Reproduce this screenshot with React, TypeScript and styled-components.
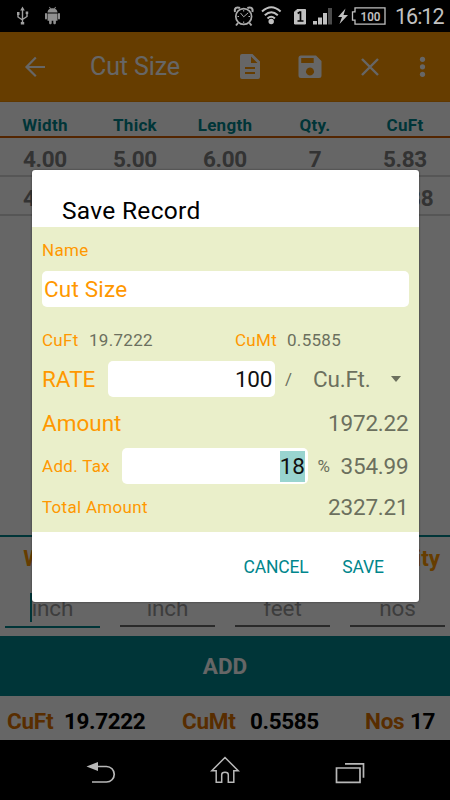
import React from "react";
import styled, { createGlobalStyle } from "styled-components";

const teal = "#00868c";
const orange = "#ff9800";
const muted = "#6c705e";

const GlobalStyle = createGlobalStyle`
  html, body { margin: 0; padding: 0; background: #000; }
  * { box-sizing: border-box; }
`;

const Phone = styled.div`
  position: relative;
  width: 450px;
  height: 800px;
  overflow: hidden;
  display: flex;
  flex-direction: column;
  background: #000;
  font-family: Roboto, "Liberation Sans", sans-serif;
`;

const StatusBar = styled.header`
  height: 32px;
  flex: none;
  display: flex;
  justify-content: space-between;
  background: #000;
  svg { display: block; }
`;

const StatusRight = styled.div`
  display: flex;
`;

const Clock = styled.span`
  width: 62px;
  line-height: 33px;
  padding-left: 7px;
  font-size: 21.5px;
  letter-spacing: -1px;
  color: #c2c2c2;
  white-space: nowrap;
`;

const Screen = styled.main`
  position: relative;
  height: 708px;
  flex: none;
  display: flex;
  flex-direction: column;
  background: #fff;
`;

const Scrim = styled.div`
  position: absolute;
  inset: 0;
  background: rgba(0, 0, 0, 0.6);
`;

const AppBar = styled.div`
  height: 70px;
  flex: none;
  display: flex;
  align-items: center;
  background: ${orange};
  border-bottom: 1px solid #f08c00;
  svg { display: block; }
`;

const AppTitle = styled.h1`
  margin: 0;
  width: 136px;
  font-size: 25px;
  font-weight: 400;
  line-height: 71px;
  color: #fff;
  letter-spacing: -0.1px;
`;

const Columns = styled.div<{ $h: number; $head?: boolean }>`
  height: ${(p) => p.$h}px;
  flex: none;
  display: grid;
  grid-template-columns: repeat(5, 90px);
  text-align: center;
  font-weight: 700;
  font-size: ${(p) => (p.$head ? 17 : 22.5)}px;
  letter-spacing: ${(p) => (p.$head ? 0.3 : -0.35)}px;
  color: ${(p) => (p.$head ? teal : "#808080")};
  border-bottom: 2px solid ${(p) => (p.$head ? "#d05c00" : "#d8d8d8")};
  line-height: ${(p) => (p.$head ? 46 : 42.5)}px;
`;

const Records = styled.div`
  height: 435px;
  flex: none;
  border-bottom: 2px solid ${teal};
`;

const Fields = styled.div`
  height: 99px;
  flex: none;
  display: grid;
  grid-template-columns: repeat(4, 95px);
  column-gap: 20px;
  padding-left: 5px;
`;

const Field = styled.label`
  display: flex;
  flex-direction: column;
  text-align: center;
  font-size: 22.5px;
`;

const FieldLabel = styled.b`
  height: 43px;
  line-height: 43px;
  color: ${orange};
`;

const FieldHint = styled.span<{ $active?: boolean }>`
  height: ${(p) => (p.$active ? 47.5 : 47)}px;
  line-height: 57px;
  color: #999;
  letter-spacing: -0.1px;
  border-bottom: 2px solid ${(p) => (p.$active ? teal : "#6a6a6a")};
`;

const Caret = styled.i`
  display: inline-block;
  width: 2px;
  height: 29px;
  margin-left: -2px;
  vertical-align: -6px;
  background: ${teal};
`;

const AddBar = styled.div`
  height: 60px;
  flex: none;
  line-height: 61px;
  text-align: center;
  background: ${teal};
  color: #fff;
  font-size: 22.5px;
  font-weight: 700;
`;

const Totals = styled.div`
  height: 44px;
  display: flex;
  line-height: 50.5px;
  padding-left: 7px;
  font-size: 22.5px;
  font-weight: 700;
  color: #000;
  white-space: nowrap;
`;

const TotalName = styled.span<{ $w: number }>`
  width: ${(p) => p.$w}px;
  letter-spacing: -0.25px;
  color: #dc7200;
`;

const TotalValue = styled.span<{ $w: number }>`
  width: ${(p) => p.$w}px;
  letter-spacing: -0.4px;
`;

const NavBar = styled.nav`
  height: 60px;
  flex: none;
  svg { display: block; }
`;

const Dialog = styled.section`
  position: absolute;
  left: 31.5px;
  top: 170px;
  width: 387px;
  height: 431.5px;
  display: flex;
  flex-direction: column;
  background: #fff;
  border-radius: 3px;
  overflow: hidden;
  box-shadow: 0 0 2px rgba(0, 0, 0, 0.6);
`;

const DialogTitle = styled.h2`
  margin: 0;
  height: 57px;
  flex: none;
  padding: 26px 0 0 30.5px;
  font-size: 24.500px;
  font-weight: 400;
  line-height: 30px;
  color: #000;
  letter-spacing: 0.3px;
`;

const Form = styled.div`
  height: 304.5px;
  flex: none;
  padding: 0 10px 0 10.5px;
  background: #eaefca;
`;

const Row = styled.div<{ $h: number; $drop?: number }>`
  height: ${(p) => p.$h}px;
  padding-top: ${(p) => p.$drop ?? 0}px;
  display: flex;
  align-items: center;
  white-space: nowrap;
`;

const Text = styled.span<{ $big?: boolean; $w?: number; $grey?: boolean; $end?: boolean; $inset?: number }>`
  flex: none;
  width: ${(p) => (p.$w ? `${p.$w}px` : "auto")};
  margin-left: ${(p) => (p.$end ? "auto" : "0")};
  padding-left: ${(p) => p.$inset ?? 0}px;
  font-size: ${(p) => (p.$big ? 22.5 : 17)}px;
  line-height: 26px;
  letter-spacing: ${(p) => (p.$big ? (p.$grey ? -0.2 : 0) : 0.3)}px;
  color: ${(p) => (p.$grey ? muted : orange)};
`;

const Input = styled.div<{ $w: number; $right?: boolean }>`
  width: ${(p) => p.$w}px;
  height: 36px;
  flex: none;
  display: flex;
  align-items: center;
  justify-content: ${(p) => (p.$right ? "flex-end" : "flex-start")};
  padding: 0 3px 0 2px;
  border-radius: 5px;
  background: #fff;
  color: ${(p) => (p.$right ? "#111" : orange)};
  font-size: 22.5px;
  line-height: 31px;
  letter-spacing: ${(p) => (p.$right ? -0.3 : 0.2)}px;
`;

const Selection = styled.span`
  background: #99d4cf;
  height: 31px;
`;

const Actions = styled.div`
  height: 70px;
  display: flex;
  align-items: center;
  padding-left: 212px;
  gap: 34px;
`;

const Action = styled.button`
  border: 0;
  padding: 0;
  background: none;
  font: 400 17.500px/20px Roboto, sans-serif;
  letter-spacing: -0.2px;
  color: ${teal};
`;

const DropArrow = styled.i`
  margin-left: auto;
  margin-right: 7.5px;
  border: 5.5px solid transparent;
  border-top: 6px solid ${muted};
  border-bottom: 0;
`;

const LeftIcons = () => (
  <svg width="70" height="32" fill="none" stroke="#a0a0a0" strokeWidth="1.4">
    <path d="M22.5 9v14M18 13v4l4.5 3M27 12v4.5l-4.5 3" />
    <path d="M22.5 6.500l-2.300 4h4.600zM20.800 22h3.400v2.500h-3.400zM17 12h2.500v3H17zM25.700 11.500h2.500v2.500h-2.500z" fill="#a0a0a0" stroke="none" />
    <g fill="#909090" stroke="none">
      <path d="M47.500 12.500c0-2 1.300-3.200 2.500-3.800l-1-1.500.8-.4 1.100 1.600c1-.3 2.200-.3 3.200 0l1.100-1.600.8.4-1 1.500c1.200.6 2.500 1.800 2.500 3.800zM47.500 13.500h10v7.200h-1.600V23c0 1.800-2.600 1.800-2.600 0v-2.300h-1.600V23c0 1.800-2.600 1.800-2.600 0v-2.300h-1.600z" />
      <rect x="45" y="13" width="2" height="6.500" rx="1" />
      <rect x="58" y="13" width="2" height="6.500" rx="1" />
    </g>
  </svg>
);

const RightIcons = () => (
  <svg width="155" height="32" viewBox="233 0 155 32" fill="none" stroke="#c0c0c0">
    <g stroke="#aaa" strokeWidth="1.7">
      <circle cx="243.700" cy="16.500" r="7.900" />
      <path d="M235 12c-1-4 2-5.500 5-4M252.400 12c1-4-2-5.500-5-4M238 23l-2 2.500M249.500 23l2 2.500" strokeWidth="2" />
      <path d="M240.500 13l3.200 3.800 4.500-4M243.700 10v1.500M243.700 21.500V23M237.500 16.500h1.500M248.500 16.500h1.500" strokeWidth="1" />
    </g>
    <g strokeWidth="2">
      <path d="M262 11.500q9.300-8.500 18.600 0M264.800 15.200q6.500-6 13 0M267.500 18.500q3.700-3.500 7.400 0" />
      <circle cx="271.200" cy="21.500" r="2.700" fill="#c0c0c0" stroke="none" />
    </g>
    <path d="M297 9.500h8.500v14.500h-11V12z" fill="#c0c0c0" stroke="#c0c0c0" strokeLinejoin="round" />
    <path d="M297.700 13.500l2-1.500h.8v8.500M297.500 21h6" stroke="#000" strokeWidth="1.700" />
    <g fill="#c0c0c0" stroke="none">
      <path d="M313 21h4v3.500h-4zM318 17.500h4v7h-4zM323 13h4v11.500h-4z" />
      <path d="M328 8h4v16.500h-4z" fill="#4b4b4b" />
      <path d="M345.500 8.500l-7.500 8.500h4l-2.500 7 8.500-9h-4.500z" />
    </g>
    <path d="M355 7.800h30v16.400h-30v-4h-2.500v-8.400h2.500z" strokeWidth="1.300" />
    <text x="360.500" y="20.800" fill="#c0c0c0" stroke="none" fontSize="13" fontWeight="600" textLength="20" lengthAdjust="spacingAndGlyphs">100</text>
  </svg>
);

const BackArrow = () => (
  <svg width="90" height="69" fill="none" stroke="#fff" strokeWidth="2.2">
    <path d="M45 35H27M35.800 25.500L26.500 35l9.300 9.200" />
  </svg>
);

const BarIcons = () => (
  <svg width="224" height="69" viewBox="226 32 224 69" fill="#fff">
    <path fillRule="evenodd" d="M242 54h10.500l7.500 7.500V77q0 2-2 2h-16q-2 0-2-2V56q0-2 2-2zM251 56.500V63h6.500zM245 67v2h10v-2zM245 72v2h10v-2z" />
    <path fillRule="evenodd" d="M301 55.500h15l5.500 5.500v14.500q0 2.500-2.500 2.500h-18q-2.500 0-2.500-2.500V58q0-2.500 2.500-2.500zM301.200 58v5h12.500v-5zM310 67.500a4 4 0 1 0 .01 0z" />
    <path d="M362 59l16 16M378 59l-16 16" fill="none" stroke="#fff" strokeWidth="2.4" />
    <circle cx="422.500" cy="59.300" r="2.600" />
    <circle cx="422.500" cy="66.800" r="2.600" />
    <circle cx="422.500" cy="74.300" r="2.600" />
  </svg>
);

const NavIcons = () => (
  <svg width="450" height="60" viewBox="0 740 450 60" fill="none" stroke="#b8b8b8" strokeWidth="1.7">
    <path d="M96 766.500h10.500a7.500 7.500 0 0 1 0 15.500H92" />
    <path d="M86.500 766.500l11.500-4.500v9z" fill="#b8b8b8" stroke="none" />
    <path d="M225 757.500l-13.200 13.200h4.400v11.500h5.500v-7.500q0-2.500 3.300-2.500t3.300 2.500v7.500h5.500v-11.500h4.400z" strokeWidth="1.500" />
    <path d="M336.500 768h23.500v14.300h-23.500zM345 763.800h18.500v14" />
  </svg>
);

const headings = ["Width", "Thick", "Length", "Qty.", "CuFt"];
const records = [
  ["4.00", "5.00", "6.00", "7", "5.83"],
  ["4.00", "5.00", "10.00", "10", "13.88"],
];
const fields = [
  ["Width", "inch"],
  ["Thick", "inch"],
  ["Length", "feet"],
  ["Quantity", "nos"],
];

export default function App() {
  return (
    <Phone>
      <GlobalStyle />
      <StatusBar>
        <LeftIcons />
        <StatusRight>
          <RightIcons />
          <Clock>16:12</Clock>
        </StatusRight>
      </StatusBar>
      <Screen>
        <AppBar>
          <BackArrow />
          <AppTitle>Cut Size</AppTitle>
          <BarIcons />
        </AppBar>
        <Records>
          <Columns $h={36} $head>
            {headings.map((h) => <span key={h}>{h}</span>)}
          </Columns>
          {records.map((r, i) => (
            <Columns key={i} $h={39}>
              {r.map((v, j) => <span key={j}>{v}</span>)}
            </Columns>
          ))}
        </Records>
        <Fields>
          {fields.map(([label, hint], i) => (
            <Field key={label}>
              <FieldLabel>{label}</FieldLabel>
              <FieldHint $active={i === 0}>{i === 0 && <Caret />}{hint}</FieldHint>
            </Field>
          ))}
        </Fields>
        <AddBar>ADD</AddBar>
        <Totals>
          <TotalName $w={57}>CuFt</TotalName>
          <TotalValue $w={118}>19.7222</TotalValue>
          <TotalName $w={68}>CuMt</TotalName>
          <TotalValue $w={115}>0.5585</TotalValue>
          <TotalName $w={45}>Nos</TotalName>
          <TotalValue $w={30}>17</TotalValue>
        </Totals>
        <Scrim />
      </Screen>
      <NavBar>
        <NavIcons />
      </NavBar>
      <Dialog>
        <DialogTitle>Save Record</DialogTitle>
        <Form>
          <Row $h={44} $drop={1}><Text>Name</Text></Row>
          <Row $h={36}><Input $w={366.5}>Cut Size</Input></Row>
          <Row $h={54} $drop={11}>
            <Text $w={47}>CuFt</Text>
            <Text $w={146} $grey>19.7222</Text>
            <Text $w={52}>CuMt</Text>
            <Text $grey>0.5585</Text>
          </Row>
          <Row $h={36}>
            <Text $w={65.5} $big>RATE</Text>
            <Input $w={167.5} $right>100</Input>
            <Text $w={38} $grey $inset={10}>/</Text>
            <Text $big $grey>Cu.Ft.</Text>
            <DropArrow />
          </Row>
          <Row $h={51}>
            <Text $big>Amount</Text>
            <Text $big $grey $end>1972.22</Text>
          </Row>
          <Row $h={36}>
            <Text $w={80}>Add. Tax</Text>
            <Input $w={185.5} $right><Selection>18</Selection></Input>
            <Text $grey $inset={10}>%</Text>
            <Text $big $grey $end>354.99</Text>
          </Row>
          <Row $h={46}>
            <Text>Total Amount</Text>
            <Text $big $grey $end>2327.21</Text>
          </Row>
        </Form>
        <Actions>
          <Action>CANCEL</Action>
          <Action>SAVE</Action>
        </Actions>
      </Dialog>
    </Phone>
  );
}
